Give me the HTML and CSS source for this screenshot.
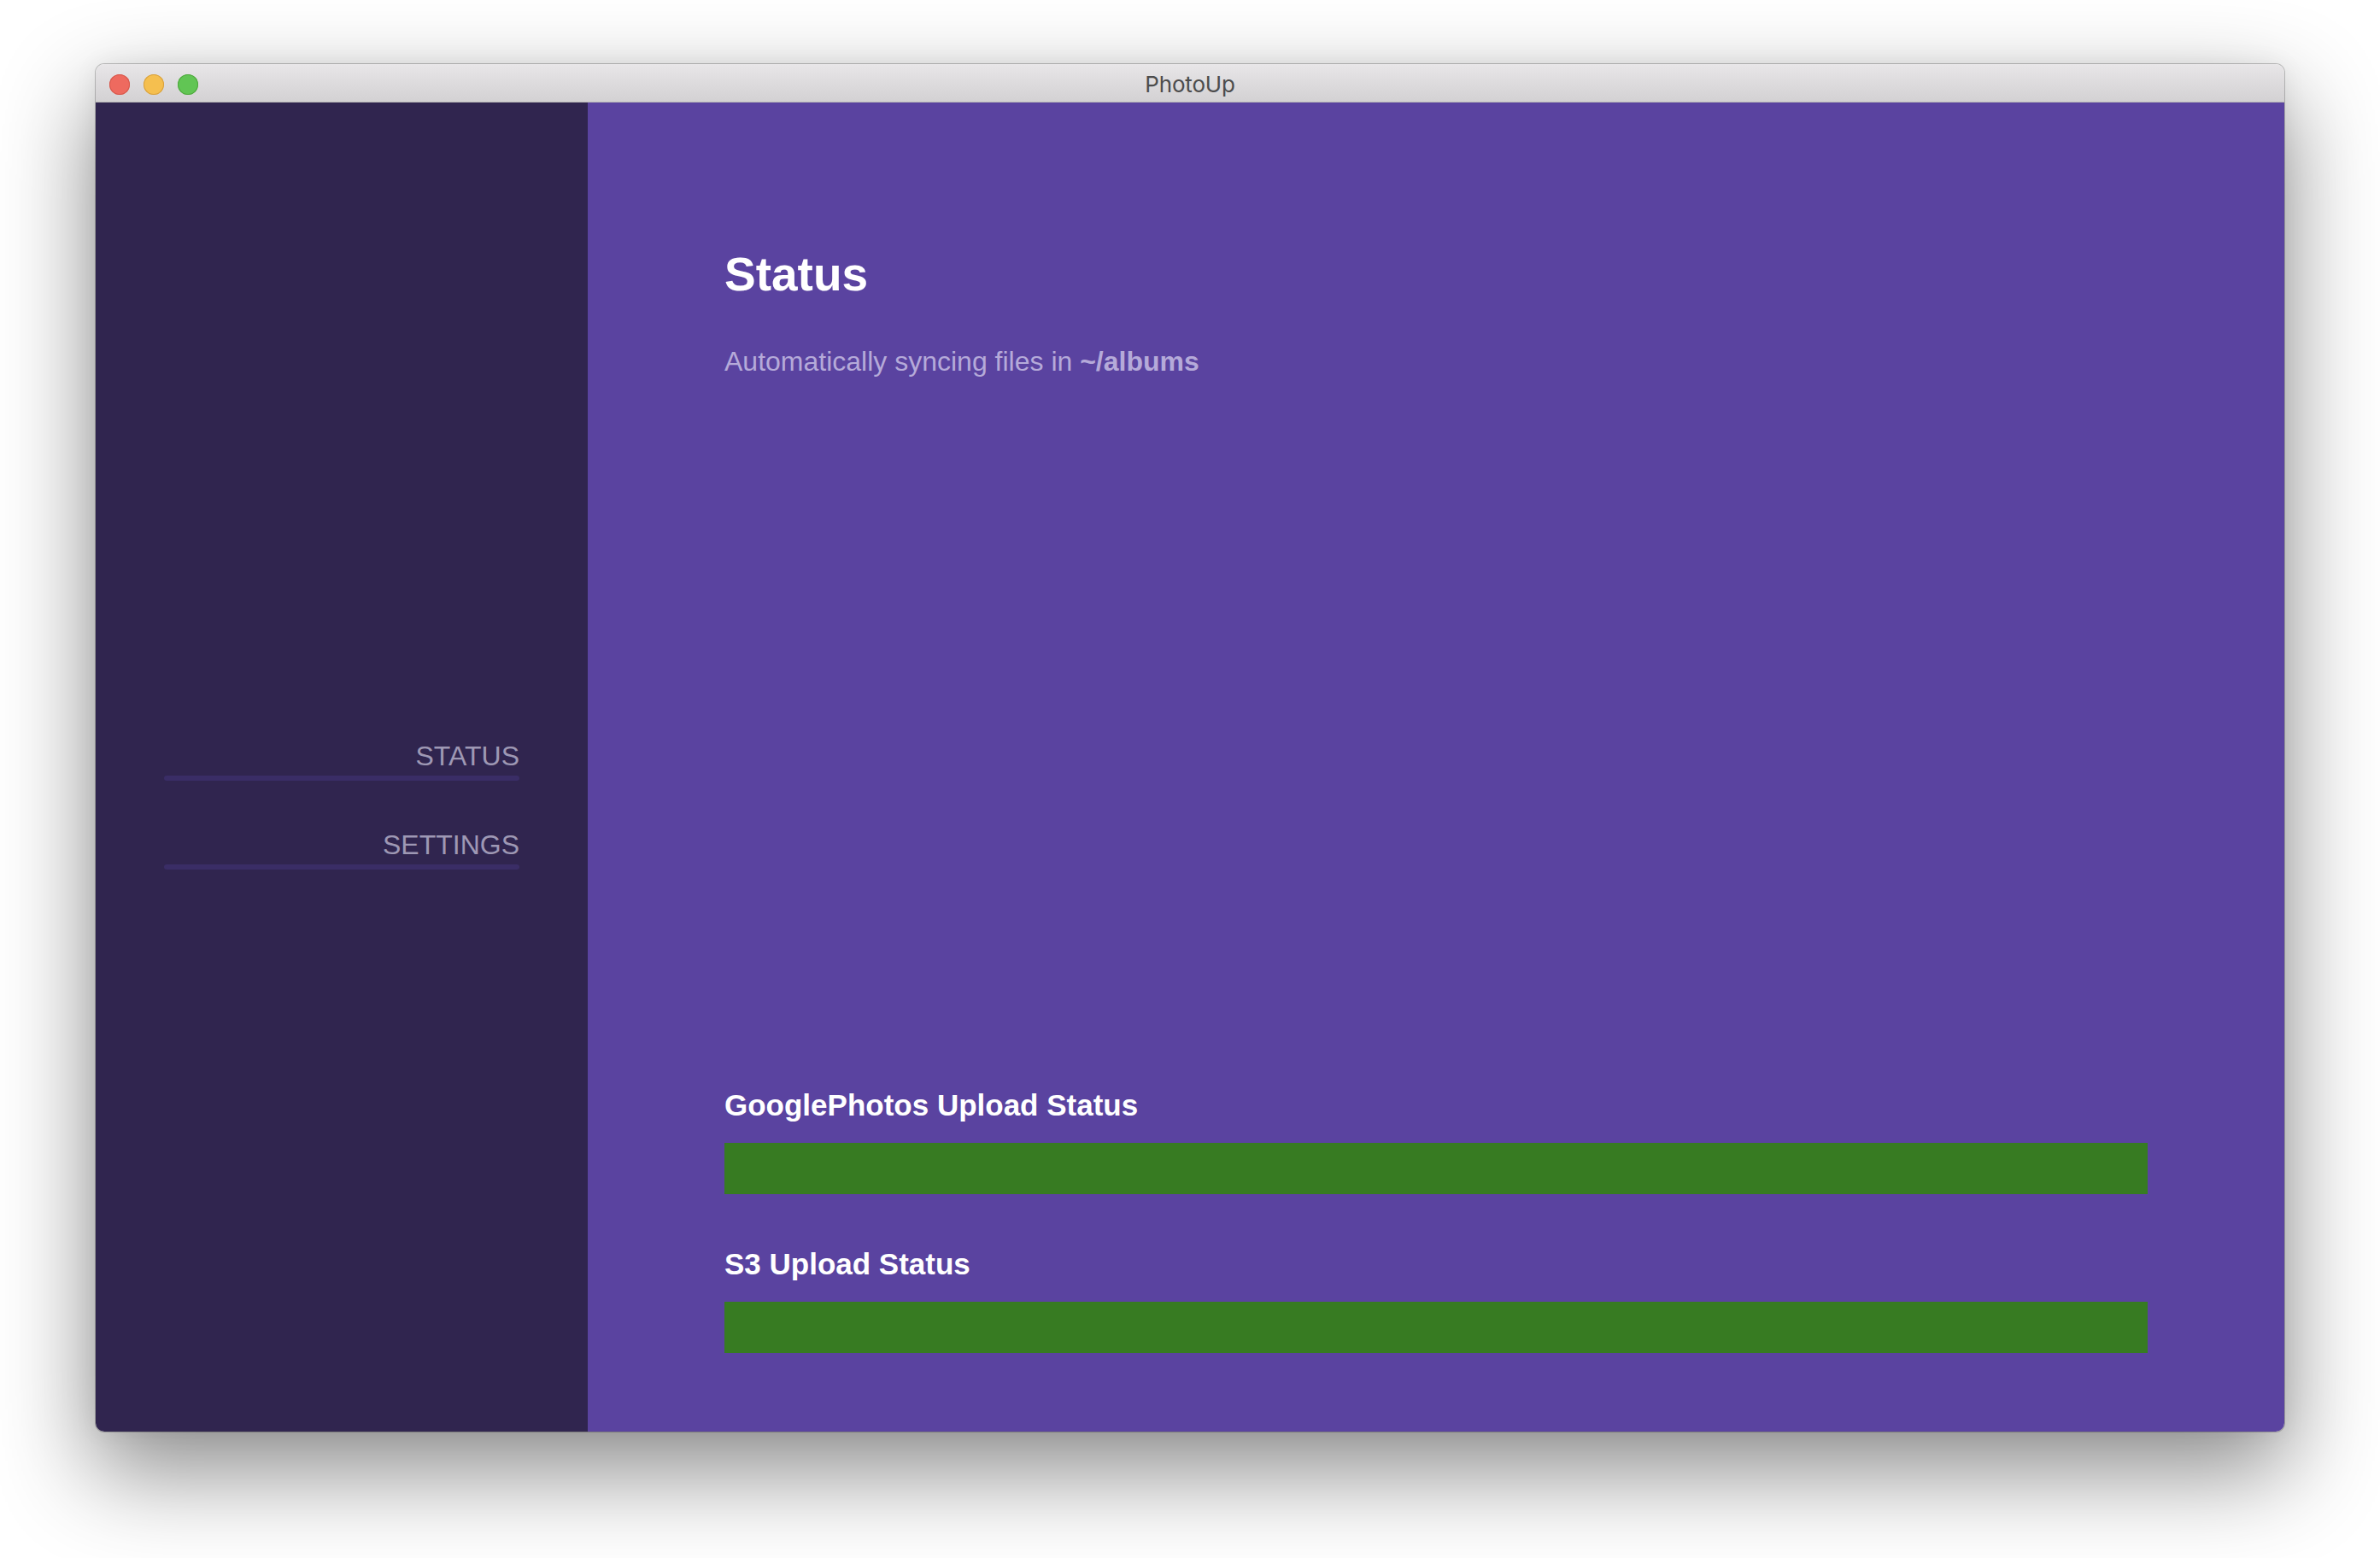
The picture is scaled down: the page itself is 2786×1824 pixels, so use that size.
FILE: index.html
```html
<!DOCTYPE html>
<html lang="en">
<head>
<meta charset="utf-8">
<title>PhotoUp</title>
<link rel="stylesheet" href="styles.css">
</head>
<body>
  <div class="window">
    <header class="titlebar">
      <div class="lights">
        <span class="light light-close"></span>
        <span class="light light-min"></span>
        <span class="light light-max"></span>
      </div>
      <div class="title">PhotoUp</div>
      <div class="titlebar-spacer"></div>
    </header>
    <div class="app">
      <aside class="sidebar">
        <nav class="nav">
          <a class="nav-item">STATUS</a>
          <a class="nav-item">SETTINGS</a>
        </nav>
      </aside>
      <main class="main">
        <h1 class="heading">Status</h1>
        <p class="subtitle">Automatically syncing files in <strong>~/albums</strong></p>
        <section class="uploads">
          <div class="upload">
            <h2 class="upload-title">GooglePhotos Upload Status</h2>
            <div class="bar"><div class="bar-fill" style="width:100%"></div></div>
          </div>
          <div class="upload">
            <h2 class="upload-title">S3 Upload Status</h2>
            <div class="bar"><div class="bar-fill" style="width:100%"></div></div>
          </div>
        </section>
      </main>
    </div>
  </div>
</body>
</html>
```

FILE: styles.css
```css
* { box-sizing: border-box; }

html, body {
  margin: 0;
  padding: 0;
  background: #ffffff;
}

html { height: 100%; }

body {
  min-height: 1824px;
  padding: 75px 112px 0;
  font-family: "Liberation Sans", Arial, Helvetica, sans-serif;
}

.window {
  width: 2562px;
  height: 1601px;
  display: flex;
  flex-direction: column;
  border-radius: 10px;
  overflow: hidden;
  box-shadow: 0 0 0 1px rgba(0, 0, 0, 0.22), 0 44px 110px 4px rgba(0, 0, 0, 0.45), 0 0 30px rgba(0, 0, 0, 0.06);
}

.titlebar {
  height: 45px;
  flex: 0 0 45px;
  display: grid;
  grid-template-columns: 1fr auto 1fr;
  align-items: center;
  background: linear-gradient(#e8e6e8, #d3d1d3);
  border-bottom: 1px solid #b9b9b9;
}

.lights {
  display: flex;
  gap: 16px;
  padding-left: 16px;
  padding-top: 2px;
  align-items: center;
}

.light {
  width: 24px;
  height: 24px;
  border-radius: 50%;
  display: block;
}
.light-close { background: #ee6a5f; box-shadow: inset 0 0 0 1px #d5574b; }
.light-min { background: #f5bf4f; box-shadow: inset 0 0 0 1px #d7a03e; }
.light-max { background: #61c554; box-shadow: inset 0 0 0 1px #4fa73d; }

.title {
  font-family: Inter, "Noto Sans", sans-serif;
  font-size: 26px;
  color: #4c4c4c;
  letter-spacing: -0.2px;
  line-height: 44px;
  padding-top: 2px;
}

.app {
  flex: 1;
  display: flex;
  min-height: 0;
}

.sidebar {
  width: 576px;
  flex: 0 0 576px;
  background: #30254f;
  padding: 747px 80px 0;
}

.nav {
  display: flex;
  flex-direction: column;
  gap: 57px;
}

.nav-item {
  display: block;
  text-align: right;
  font-size: 32px;
  line-height: 36px;
  color: #9e98b4;
}

.nav-item::after {
  content: "";
  display: block;
  height: 6px;
  margin-top: 5px;
  border-radius: 3px;
  background: #3a2d66;
}

.main {
  flex: 1;
  background: #5a43a0;
  padding: 169px 160px 92px;
  display: flex;
  flex-direction: column;
}

.heading {
  margin: 0;
  font-size: 55px;
  line-height: 64px;
  font-weight: bold;
  color: #ffffff;
}

.subtitle {
  margin: 50px 0 0;
  font-size: 32px;
  line-height: 40px;
  color: #b5aad9;
}

.subtitle strong {
  font-weight: bold;
}

.uploads {
  margin-top: auto;
  display: flex;
  flex-direction: column;
  gap: 62px;
}

.upload-title {
  margin: 0 0 24px;
  font-size: 35px;
  line-height: 40px;
  font-weight: bold;
  color: #ffffff;
}

.bar {
  height: 60px;
  background: #4a3a86;
}

.bar-fill {
  height: 100%;
  background: #377b22;
}
```
